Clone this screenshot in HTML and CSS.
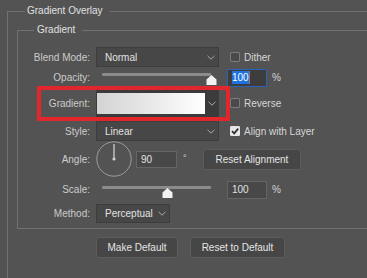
FILE: index.html
```html
<!DOCTYPE html>
<html lang="en">
<head>
<meta charset="utf-8">
<title>Gradient Overlay</title>
<link rel="stylesheet" href="styles.css">
</head>
<body>
<section class="group group-outer">
  <h2 class="group-title group-title-outer">Gradient Overlay</h2>
  <section class="group group-inner">
    <h3 class="group-title group-title-inner">Gradient</h3>

    <div class="row row-blend">
      <span class="label">Blend Mode:</span>
      <div class="select select-wide">
        <span class="select-text">Normal</span>
        <svg class="chev" width="8" height="5" viewBox="0 0 8 5"><path d="M0.5 0.8 L4 4.2 L7.5 0.8" /></svg>
      </div>
      <span class="check"><span class="box"></span><span class="check-text">Dither</span></span>
    </div>

    <div class="row row-opacity">
      <span class="label">Opacity:</span>
      <div class="slider">
        <div class="track">
          <svg class="thumb" style="left:100%" width="11" height="10" viewBox="0 0 11 10"><path d="M5.5 0 L10.5 4.5 L10.5 10 L0.5 10 L0.5 4.5 Z" /></svg>
        </div>
      </div>
      <div class="num num-active"><span class="sel">100</span><span class="caret"></span></div>
      <span class="unit">%</span>
    </div>

    <div class="row row-gradient">
      <span class="label">Gradient:</span>
      <div class="grad-picker">
        <span class="grad-swatch"></span>
        <span class="grad-arrow">
          <svg class="chev" width="8" height="5" viewBox="0 0 8 5"><path d="M0.5 0.8 L4 4.2 L7.5 0.8" /></svg>
        </span>
      </div>
      <span class="check"><span class="box"></span><span class="check-text">Reverse</span></span>
    </div>

    <div class="row row-style">
      <span class="label">Style:</span>
      <div class="select select-wide">
        <span class="select-text">Linear</span>
        <svg class="chev" width="8" height="5" viewBox="0 0 8 5"><path d="M0.5 0.8 L4 4.2 L7.5 0.8" /></svg>
      </div>
      <span class="check"><span class="box box-checked"><svg width="10" height="10" viewBox="0 0 10 10"><path d="M2 5.2 L4.2 7.4 L8.2 2.6" /></svg></span><span class="check-text">Align with Layer</span></span>
    </div>

    <div class="row row-angle">
      <span class="label">Angle:</span>
      <svg class="dial" width="36" height="36" viewBox="0 0 36 36">
        <circle class="dial-ring" cx="18" cy="18" r="17.2" />
        <line class="dial-hand" x1="18" y1="18" x2="18" y2="3" />
        <circle class="dial-dot" cx="18" cy="18" r="1.6" />
      </svg>
      <div class="num num-angle">90</div>
      <span class="unit unit-deg">°</span>
      <button class="btn btn-align" type="button">Reset Alignment</button>
    </div>

    <div class="row row-scale">
      <span class="label">Scale:</span>
      <div class="slider">
        <div class="track">
          <svg class="thumb" style="left:60.5%" width="11" height="10" viewBox="0 0 11 10"><path d="M5.5 0 L10.5 4.5 L10.5 10 L0.5 10 L0.5 4.5 Z" /></svg>
        </div>
      </div>
      <div class="num">100</div>
      <span class="unit">%</span>
    </div>

    <div class="row row-method">
      <span class="label">Method:</span>
      <div class="select select-narrow">
        <span class="select-text">Perceptual</span>
        <svg class="chev" width="8" height="5" viewBox="0 0 8 5"><path d="M0.5 0.8 L4 4.2 L7.5 0.8" /></svg>
      </div>
    </div>
  </section>

  <div class="actions">
    <button class="btn btn-make" type="button">Make Default</button>
    <button class="btn btn-reset" type="button">Reset to Default</button>
  </div>
</section>
</body>
</html>
```

FILE: styles.css
```css
html, body {
  margin: 0;
  padding: 0;
  background: #535353;
  overflow: hidden;
}

body {
  width: 367px;
  height: 278px;
  font-family: "Liberation Sans", Arial, sans-serif;
  font-size: 10px;
  color: #cfcfcf;
}

.group {
  border-top: 1px solid #727272;
  border-left: 1px solid #727272;
}

.group-outer {
  margin: 11px 0 0 7px;
  padding: 0 0 0 9px;
  width: 360px;
  height: 300px;
}

.group-inner {
  margin-top: 12px;
  padding: 0 0 5px 0;
  border-bottom: 1px solid #727272;
}

/* title sits on the group's top border line */
.group-title {
  width: fit-content;
  margin-top: -8px;
  margin-right: 0;
  line-height: 14px;
  height: 14px;
  font-size: 10px;
  font-weight: normal;
  color: #e0e0e0;
  background: #535353;
}

.group-title-outer {
  margin-left: 8px;
  margin-bottom: 0;
  padding: 0 7px 0 2px;
}

.group-title-inner {
  margin-left: 16px;
  margin-bottom: 10px;
  padding: 0 7px 0 3px;
}

.row {
  display: flex;
  align-items: center;
}

.label {
  width: 72px;
  margin-right: 6px;
  text-align: right;
  color: #cbcbcb;
  flex: none;
}

.row-blend { height: 20px; }
.row-opacity { height: 21px; }
.row-gradient { height: 30px; position: relative; }
.row-style { height: 20px; margin-top: 3px; }
.row-angle { height: 36px; }
.row-scale { height: 19px; margin-top: 3px; }
.row-method { height: 19px; margin-top: 5px; }

/* annotation frame over the gradient row */
.row-gradient::after {
  content: "";
  position: absolute;
  left: 19px;
  top: -2px;
  width: 193px;
  height: 35px;
  box-sizing: border-box;
  border: 4px solid #e3262b;
  pointer-events: none;
}

.select {
  box-sizing: border-box;
  height: 100%;
  display: flex;
  align-items: center;
  justify-content: space-between;
  padding: 0 3px 0 8px;
  background: #474747;
  border: 1px solid #3d3d3d;
  color: #e2e2e2;
  flex: none;
}

.select-wide { width: 123px; }
.select-narrow { width: 74px; }

.chev {
  display: block;
  flex: none;
}

.chev path {
  fill: none;
  stroke: #a9a9a9;
  stroke-width: 1;
}

.check {
  display: flex;
  align-items: center;
  margin-left: 11px;
  color: #d6d6d6;
}

.box {
  box-sizing: border-box;
  width: 10px;
  height: 10px;
  border: 1px solid #7b7b7b;
  background: #4a4a4a;
  border-radius: 1px;
  margin-right: 4px;
  flex: none;
}

.box-checked {
  background: #e6e6e6;
  border-color: #e6e6e6;
}

.box-checked svg {
  display: block;
  margin: -1px;
}

.box-checked path {
  fill: none;
  stroke: #2e2e2e;
  stroke-width: 1.7;
}

.slider {
  width: 123px;
  align-self: stretch;
  flex: none;
}

.track {
  position: relative;
  height: 3px;
  margin: 6px 8px 0 6px;
  background: #8b8b8b;
  border-radius: 1px;
}

.thumb {
  position: absolute;
  top: 2px;
  margin-left: -5.5px;
  display: block;
}

.thumb path {
  fill: #f2f2f2;
}

.num {
  box-sizing: border-box;
  width: 40px;
  height: 18px;
  margin-left: 8px;
  padding-left: 4px;
  display: flex;
  align-items: center;
  background: #484848;
  border: 1px solid #656565;
  color: #e2e2e2;
  flex: none;
}

.num-active {
  background: #3d3d3d;
  border-color: #2b62b8;
}

.sel {
  background: #1f72e0;
  color: #ffffff;
  line-height: 13px;
}

.caret {
  width: 1px;
  height: 13px;
  background: #8a7a6a;
}

.num-angle {
  width: 41px;
  height: 17px;
  margin-left: 4px;
}

.unit {
  margin-left: 5px;
  color: #d6d6d6;
}

.unit-deg {
  width: 20px;
  margin-left: 6px;
  flex: none;
  align-self: flex-start;
  margin-top: 12px;
  font-size: 9px;
}

.dial {
  display: block;
  flex: none;
}

.dial-ring {
  fill: none;
  stroke: #9c9c9c;
  stroke-width: 1;
}

.dial-hand {
  stroke: #cfcfcf;
  stroke-width: 1.3;
}

.dial-dot {
  fill: #cfcfcf;
}

.grad-picker {
  box-sizing: border-box;
  width: 123px;
  height: 27px;
  display: flex;
  align-items: stretch;
  padding: 3px 0 3px 1px;
  background: #3b3b3b;
  flex: none;
}

.grad-swatch {
  flex: 1;
  background: linear-gradient(to right, #d3d3d3, #ffffff);
}

.grad-arrow {
  width: 14px;
  display: flex;
  align-items: center;
  justify-content: center;
  flex: none;
}

.btn {
  box-sizing: border-box;
  height: 21px;
  padding: 0;
  font-family: inherit;
  font-size: 10px;
  color: #e4e4e4;
  background: #464646;
  border: 1px solid #5c5c5c;
  border-radius: 3px;
}

.btn-align { width: 98px; }
.btn-make { width: 82px; }
.btn-reset { width: 95px; }

.actions {
  display: flex;
  gap: 12px;
  margin-top: 8px;
  margin-left: 79px;
}
```
